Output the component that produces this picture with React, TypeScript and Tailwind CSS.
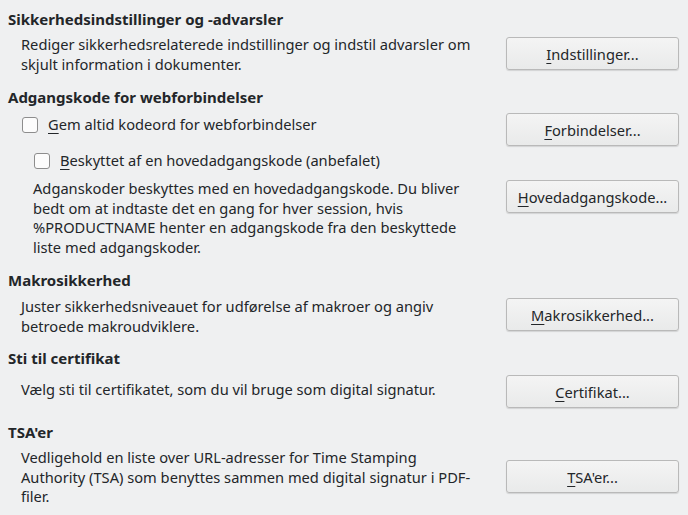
import React from "react";

const font = { fontFamily: '"Noto Sans", "Open Sans", sans-serif' };

function Btn({ mn, rest, className = "" }: { mn: string; rest: string; className?: string }) {
  return (
    <button
      className={`w-[173px] h-[33px] shrink-0 rounded-[3px] border border-[#b9b9b9] bg-gradient-to-b from-[#f4f4f4] to-[#e9eaea] shadow-[0_1px_1px_rgba(0,0,0,0.12)] text-[14.67px] leading-[20px] text-[#232629] self-start ${className}`}
    >
      <u className="underline-offset-[3px] decoration-1">{mn}</u>
      {rest}
    </button>
  );
}

function Check({ mn, rest, className = "" }: { mn: string; rest: string; className?: string }) {
  return (
    <div className={`flex items-center h-[20px] ${className}`}>
      <span className="w-[16px] h-[16px] rounded-[3px] border border-[#8d8d8d] bg-[#fcfcfc] shrink-0" />
      <span className="ml-[10px]">
        <u className="underline-offset-[3px] decoration-1">{mn}</u>
        {rest}
      </span>
    </div>
  );
}

function H({ children, className = "" }: { children: React.ReactNode; className?: string }) {
  return <div className={`font-bold text-[15px] leading-[20px] h-[20px] ${className}`}>{children}</div>;
}

export default function App() {
  return (
    <div
      style={font}
      className="w-[688px] h-[515px] overflow-hidden bg-[#eff0f1] text-[#232629] text-[14.67px] leading-[19.5px] pl-[8px] pr-[9px] pt-[9px]"
    >
      <H>Sikkerhedsindstillinger og -advarsler</H>
      <div className="flex pl-[13px]">
        <div className="flex-1 mt-[6px]">
          Rediger sikkerhedsrelaterede indstillinger og indstil advarsler om skjult information i dokumenter.
        </div>
        <Btn mn="I" rest="ndstillinger..." className="ml-[26px] mt-[8px]" />
      </div>

      <H className="mt-[13px]">Adgangskode for webforbindelser</H>
      <div className="flex">
        <div className="flex-1 pl-[14px] mt-[8px]">
          <Check mn="G" rest="em altid kodeord for webforbindelser" />
        </div>
        <Btn mn="F" rest="orbindelser..." className="ml-[26px] mt-[6px] h-[32px]" />
      </div>
      <div className="pl-[26px] mt-[5px]">
        <Check mn="B" rest="eskyttet af en hovedadgangskode (anbefalet)" />
      </div>
      <div className="flex pl-[25px]">
        <div className="flex-1 mt-[8px]">
          Adganskoder beskyttes med en hovedadgangskode. Du bliver bedt om at indtaste det en gang for hver session, hvis
          %PRODUCTNAME henter en adgangskode fra den beskyttede liste med adgangskoder.
        </div>
        <Btn mn="H" rest="ovedadgangskode..." className="ml-[26px] mt-[9px] h-[32px]" />
      </div>

      <H className="mt-[13px]">Makrosikkerhed</H>
      <div className="flex pl-[13px]">
        <div className="flex-1 mt-[7px]">
          Juster sikkerhedsniveauet for udførelse af makroer og angiv betroede makroudviklere.
        </div>
        <Btn mn="M" rest="akrosikkerhed..." className="ml-[26px] mt-[8px]" />
      </div>

      <H className="mt-[12px]">Sti til certifikat</H>
      <div className="flex pl-[13px]">
        <div className="flex-1 mt-[12px]">Vælg sti til certifikatet, som du vil bruge som digital signatur.</div>
        <Btn mn="C" rest="ertifikat..." className="ml-[26px] mt-[7px] h-[32px]" />
      </div>

      <H className="mt-[14px]">TSA'er</H>
      <div className="flex pl-[13px]">
        <div className="flex-1 mt-[6px]">
          Vedligehold en liste over URL-adresser for Time Stamping Authority (TSA) som benyttes sammen med digital
          signatur i PDF-filer.
        </div>
        <Btn mn="T" rest="SA'er..." className="ml-[26px] mt-[18px]" />
      </div>
    </div>
  );
}
